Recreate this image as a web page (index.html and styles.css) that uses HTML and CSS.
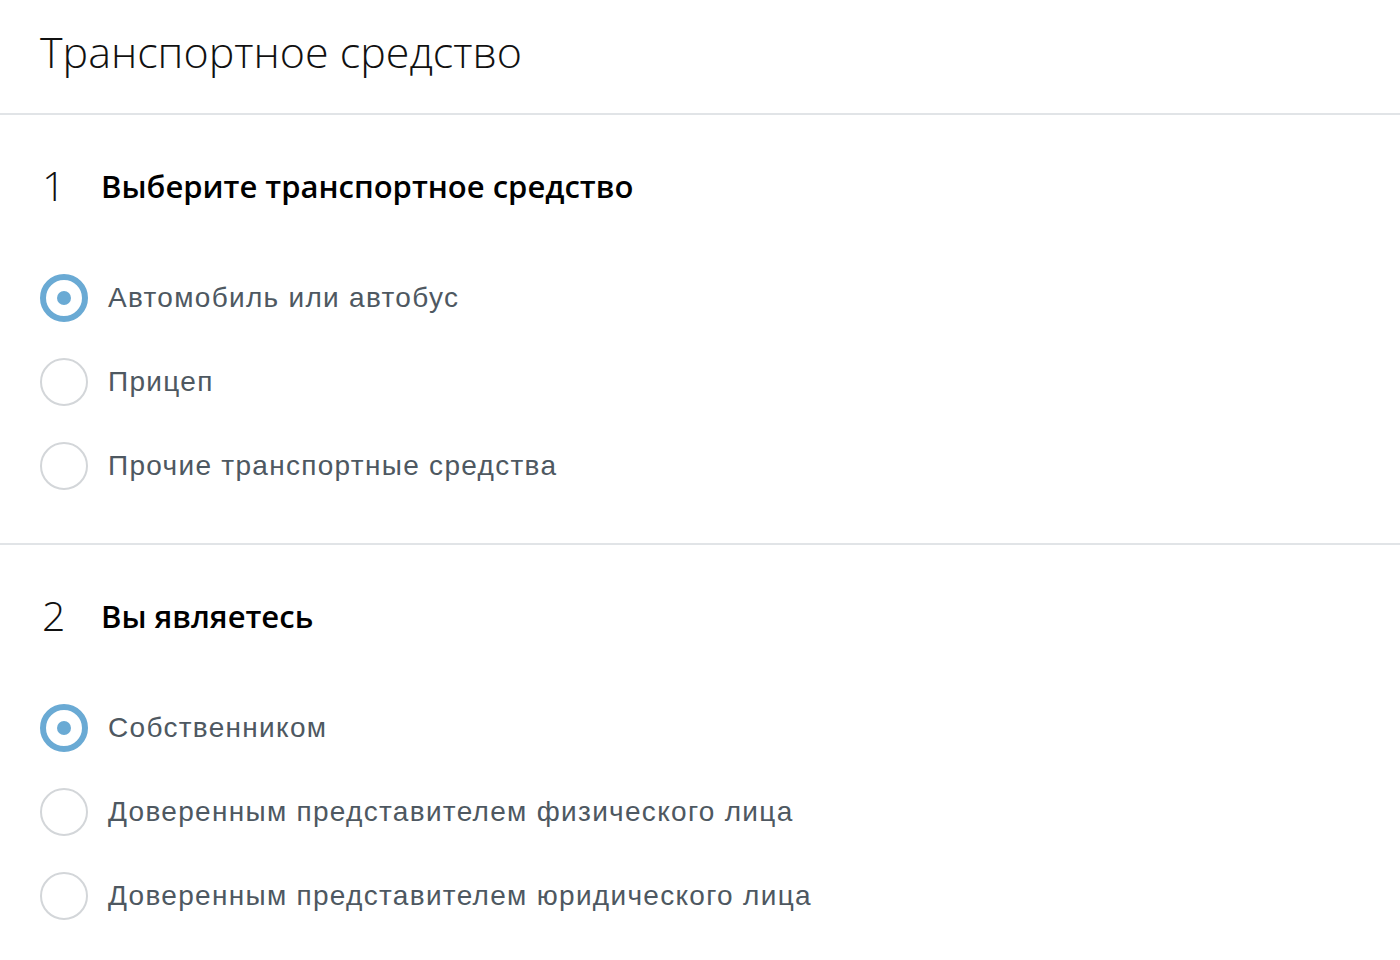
FILE: index.html
```html
<!DOCTYPE html>
<html lang="ru">
<head>
<meta charset="utf-8">
<title>Транспортное средство</title>
<link rel="stylesheet" href="styles.css">
</head>
<body>
<header class="page-head">
  <h1 class="page-title">Транспортное средство</h1>
</header>
<section class="step">
  <h2 class="step-title"><span class="step-num">1</span><span class="step-text">Выберите транспортное средство</span></h2>
  <ul class="options">
    <li class="option checked"><span class="radio"></span><span class="label">Автомобиль или автобус</span></li>
    <li class="option"><span class="radio"></span><span class="label">Прицеп</span></li>
    <li class="option"><span class="radio"></span><span class="label">Прочие транспортные средства</span></li>
  </ul>
</section>
<section class="step">
  <h2 class="step-title"><span class="step-num">2</span><span class="step-text">Вы являетесь</span></h2>
  <ul class="options">
    <li class="option checked"><span class="radio"></span><span class="label">Собственником</span></li>
    <li class="option"><span class="radio"></span><span class="label">Доверенным представителем физического лица</span></li>
    <li class="option"><span class="radio"></span><span class="label">Доверенным представителем юридического лица</span></li>
  </ul>
</section>
</body>
</html>
```
FILE: styles.css
```css
html, body {
  margin: 0;
  padding: 0;
  background: #ffffff;
}
body {
  font-family: "Open Sans", "Liberation Sans", sans-serif;
  color: #111;
}
.page-head {
  height: 113px;
  border-bottom: 2px solid #e1e4e7;
  padding: 0 40px;
  display: flex;
  align-items: center;
}
.page-title {
  margin: 0;
  font-weight: 300;
  font-size: 43px;
  color: #111;
  line-height: 1;
  padding-bottom: 10px;
}
.step {
  padding: 0 40px;
  border-bottom: 2px solid #e1e4e7;
}
.step:last-child {
  border-bottom: none;
}
.step-title {
  margin: 0;
  height: 141px;
  display: flex;
  align-items: center;
}
.step-num {
  width: 61px;
  font-weight: 300;
  font-size: 41px;
  color: #111;
  line-height: 1;
  padding-left: 2px;
  box-sizing: border-box;
}
.step-text {
  font-weight: 600;
  font-size: 31px;
  color: #000;
}
.options {
  list-style: none;
  margin: 0;
  padding: 0 0 35px 0;
}
.option {
  display: flex;
  align-items: center;
  height: 84px;
}
.radio {
  width: 48px;
  height: 48px;
  box-sizing: border-box;
  border-radius: 50%;
  border: 2px solid #d3d6d9;
  margin-right: 20px;
  display: flex;
  align-items: center;
  justify-content: center;
  flex-shrink: 0;
}
.option.checked .radio {
  border: 6px solid #6aaad4;
}
.option.checked .radio::after {
  content: "";
  width: 14px;
  height: 14px;
  border-radius: 50%;
  background: #6aaad4;
}
.label {
  font-family: "Liberation Sans", Arial, sans-serif;
  font-size: 28px;
  letter-spacing: 1.3px;
  color: #4e5861;
}
```
